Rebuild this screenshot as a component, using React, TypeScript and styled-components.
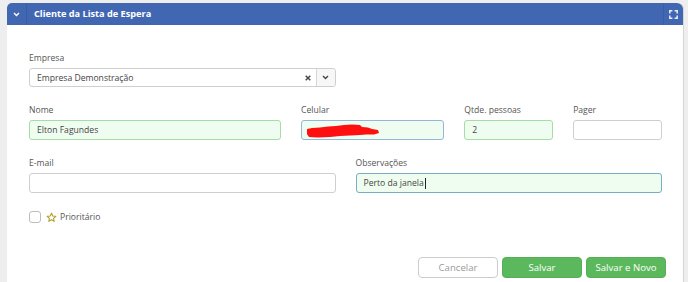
import React from "react";
import styled, { createGlobalStyle } from "styled-components";

const Global = createGlobalStyle`
  html, body { margin: 0; padding: 0; background: #eeeeee; }
  body { font-family: "Open Sans", "Liberation Sans", sans-serif; color: #555; }
  * { box-sizing: border-box; }
`;

const Page = styled.div`
  width: 688px;
  height: 282px;
  overflow: hidden;
  padding: 3px 4px 0 7px;
  background: #eeeeee;
`;

const Panel = styled.section`
  width: 677px;
  height: 300px;
  background: #fff;
  border-radius: 5px 6px 0 0;
  border-right: 1px solid #d6d6d6;
  display: flex;
  flex-direction: column;
`;

const Header = styled.header`
  height: 22px;
  background: #4267b2;
  border-radius: 5px 6px 0 0;
  display: flex;
  align-items: stretch;
  color: #fff;
`;

const HeaderBtn = styled.div<{ $side: "left" | "right" }>`
  width: 20px;
  display: flex;
  align-items: center;
  justify-content: center;
  ${(p) => (p.$side === "left" ? "border-right: 1px solid #3a5da3;" : "border-left: 1px solid #3a5da3;")}
`;

const Title = styled.h1`
  flex: 1;
  margin: 0;
  padding-left: 7px;
  font-size: 9.2px;
  font-weight: 700;
  line-height: 22px;
  color: #fff;
`;

const Body = styled.div`
  padding: 27px 21px 0 22px;
  display: flex;
  flex-direction: column;
`;

const Row = styled.div<{ $mb?: number }>`
  display: grid;
  grid-template-columns: repeat(12, 1fr);
  column-gap: 20px;
  margin-bottom: ${(p) => p.$mb ?? 17}px;
`;

const Group = styled.div<{ $span: number }>`
  grid-column: span ${(p) => p.$span};
  display: flex;
  flex-direction: column;
`;

const Label = styled.label`
  font-size: 8.6px;
  line-height: 12px;
  height: 12px;
  margin-bottom: 4px;
  color: #555;
`;

type Tone = "plain" | "valid" | "focus" | "active";

const Field = styled.div<{ $tone: Tone }>`
  position: relative;
  height: 20px;
  border-radius: 3px;
  padding: 0 7px;
  font-size: 8.6px;
  line-height: 18px;
  color: #444;
  display: flex;
  align-items: center;
  background: ${(p) => (p.$tone === "plain" ? "#fff" : "#effdf0")};
  border: 1px solid
    ${(p) =>
      p.$tone === "plain"
        ? "#cfcfcf"
        : p.$tone === "valid"
        ? "#a6dca6"
        : p.$tone === "focus"
        ? "#94b6dc"
        : "#79aec4"};
`;

const Caret = styled.span`
  display: inline-block;
  width: 1px;
  height: 11px;
  background: #222;
  margin-left: 1px;
`;

const Redaction = styled.svg`
  position: absolute;
  left: 4px;
  top: 3px;
`;

const Select = styled.div`
  height: 19px;
  border: 1px solid #cfcfcf;
  border-radius: 3px;
  display: flex;
  align-items: stretch;
  font-size: 8.6px;
  color: #444;
  background: #fff;
`;

const SelectValue = styled.div`
  flex: 1;
  padding-left: 7px;
  display: flex;
  align-items: center;
`;

const SelectClear = styled.div`
  width: 16px;
  display: flex;
  align-items: center;
  justify-content: center;
`;

const SelectToggle = styled.div`
  width: 19px;
  border-left: 1px solid #d6d6d6;
  background: #f7f7f7;
  border-radius: 0 3px 3px 0;
  display: flex;
  align-items: center;
  justify-content: center;
`;

const CheckRow = styled.div`
  display: flex;
  align-items: center;
  gap: 5px;
  height: 12px;
  font-size: 8.6px;
  color: #555;
`;

const Check = styled.span`
  width: 12px;
  height: 12px;
  border: 1px solid #bdbdbd;
  border-radius: 3px;
  background: #fff;
`;

const StarLabel = styled.span`
  display: flex;
  align-items: center;
  gap: 3px;
`;

const Footer = styled.div`
  display: flex;
  justify-content: flex-end;
  gap: 4px;
  margin-top: 34px;
  margin-right: -4px;
`;

const Button = styled.button<{ $primary?: boolean }>`
  width: 80px;
  height: 21px;
  border-radius: 4px;
  font-family: "Open Sans", "Liberation Sans", sans-serif;
  font-size: 9.6px;
  padding: 0;
  cursor: pointer;
  background: ${(p) => (p.$primary ? "#5cb85c" : "#fff")};
  color: ${(p) => (p.$primary ? "#fff" : "#9a9a9a")};
  border: 1px solid ${(p) => (p.$primary ? "#55b055" : "#cccccc")};
`;

export default function App() {
  return (
    <>
      <Global />
      <Page>
        <Panel>
          <Header>
            <HeaderBtn $side="left">
              <svg width="7" height="5" viewBox="0 0 7 5">
                <polyline points="1,1 3.5,3.5 6,1" fill="none" stroke="#fff" strokeWidth="1.4" />
              </svg>
            </HeaderBtn>
            <Title>Cliente da Lista de Espera</Title>
            <HeaderBtn $side="right">
              <svg width="9" height="9" viewBox="0 0 9 9">
                <path
                  d="M0.8 3.4V0.8H3.4M5.6 0.8H8.2V3.4M8.2 5.6V8.2H5.6M3.4 8.2H0.8V5.6"
                  fill="none"
                  stroke="#e8edf7"
                  strokeWidth="1.5"
                />
              </svg>
            </HeaderBtn>
          </Header>
          <Body>
            <Row>
              <Group $span={6}>
                <Label>Empresa</Label>
                <Select>
                  <SelectValue>Empresa Demonstração</SelectValue>
                  <SelectClear>
                    <svg width="6" height="6" viewBox="0 0 6 6">
                      <path d="M0.7 0.7L5.3 5.3M5.3 0.7L0.7 5.3" stroke="#444" strokeWidth="1.4" />
                    </svg>
                  </SelectClear>
                  <SelectToggle>
                    <svg width="7" height="5" viewBox="0 0 7 5">
                      <polyline points="1,1 3.5,3.5 6,1" fill="none" stroke="#444" strokeWidth="1.4" />
                    </svg>
                  </SelectToggle>
                </Select>
              </Group>
            </Row>
            <Row>
              <Group $span={5}>
                <Label>Nome</Label>
                <Field $tone="valid">Elton Fagundes</Field>
              </Group>
              <Group $span={3}>
                <Label>Celular</Label>
                <Field $tone="focus">
                  <Redaction width="74" height="14" viewBox="0 0 74 14">
                    <path
                      d="M1 5 L6 4 L14 3.5 L22 2.5 L30 2 L38 1 L46 0.5 L54 1 L56 3 L62 3.5 L66 5 L72 6 L73 9 L68 10.5 L60 10.5 L54 11 L44 11.5 L34 12 L24 13 L12 13.5 L3 13 L1 10 Z"
                      fill="#ff1010"
                    />
                  </Redaction>
                </Field>
              </Group>
              <Group $span={2}>
                <Label>Qtde. pessoas</Label>
                <Field $tone="valid">2</Field>
              </Group>
              <Group $span={2}>
                <Label>Pager</Label>
                <Field $tone="plain" />
              </Group>
            </Row>
            <Row $mb={18}>
              <Group $span={6}>
                <Label>E-mail</Label>
                <Field $tone="plain" />
              </Group>
              <Group $span={6}>
                <Label>Observações</Label>
                <Field $tone="active">
                  Perto da janela
                  <Caret />
                </Field>
              </Group>
            </Row>
            <CheckRow>
              <Check />
              <StarLabel>
                <svg width="11" height="11" viewBox="0 0 24 24">
                  <polygon
                    points="12,2.5 14.9,8.6 21.5,9.3 16.5,13.8 17.9,20.4 12,17 6.1,20.4 7.5,13.8 2.5,9.3 9.1,8.6"
                    fill="none"
                    stroke="#b3a128"
                    strokeWidth="2.4"
                    strokeLinejoin="round"
                  />
                </svg>
                Prioritário
              </StarLabel>
            </CheckRow>
            <Footer>
              <Button>Cancelar</Button>
              <Button $primary>Salvar</Button>
              <Button $primary>Salvar e Novo</Button>
            </Footer>
          </Body>
        </Panel>
      </Page>
    </>
  );
}
